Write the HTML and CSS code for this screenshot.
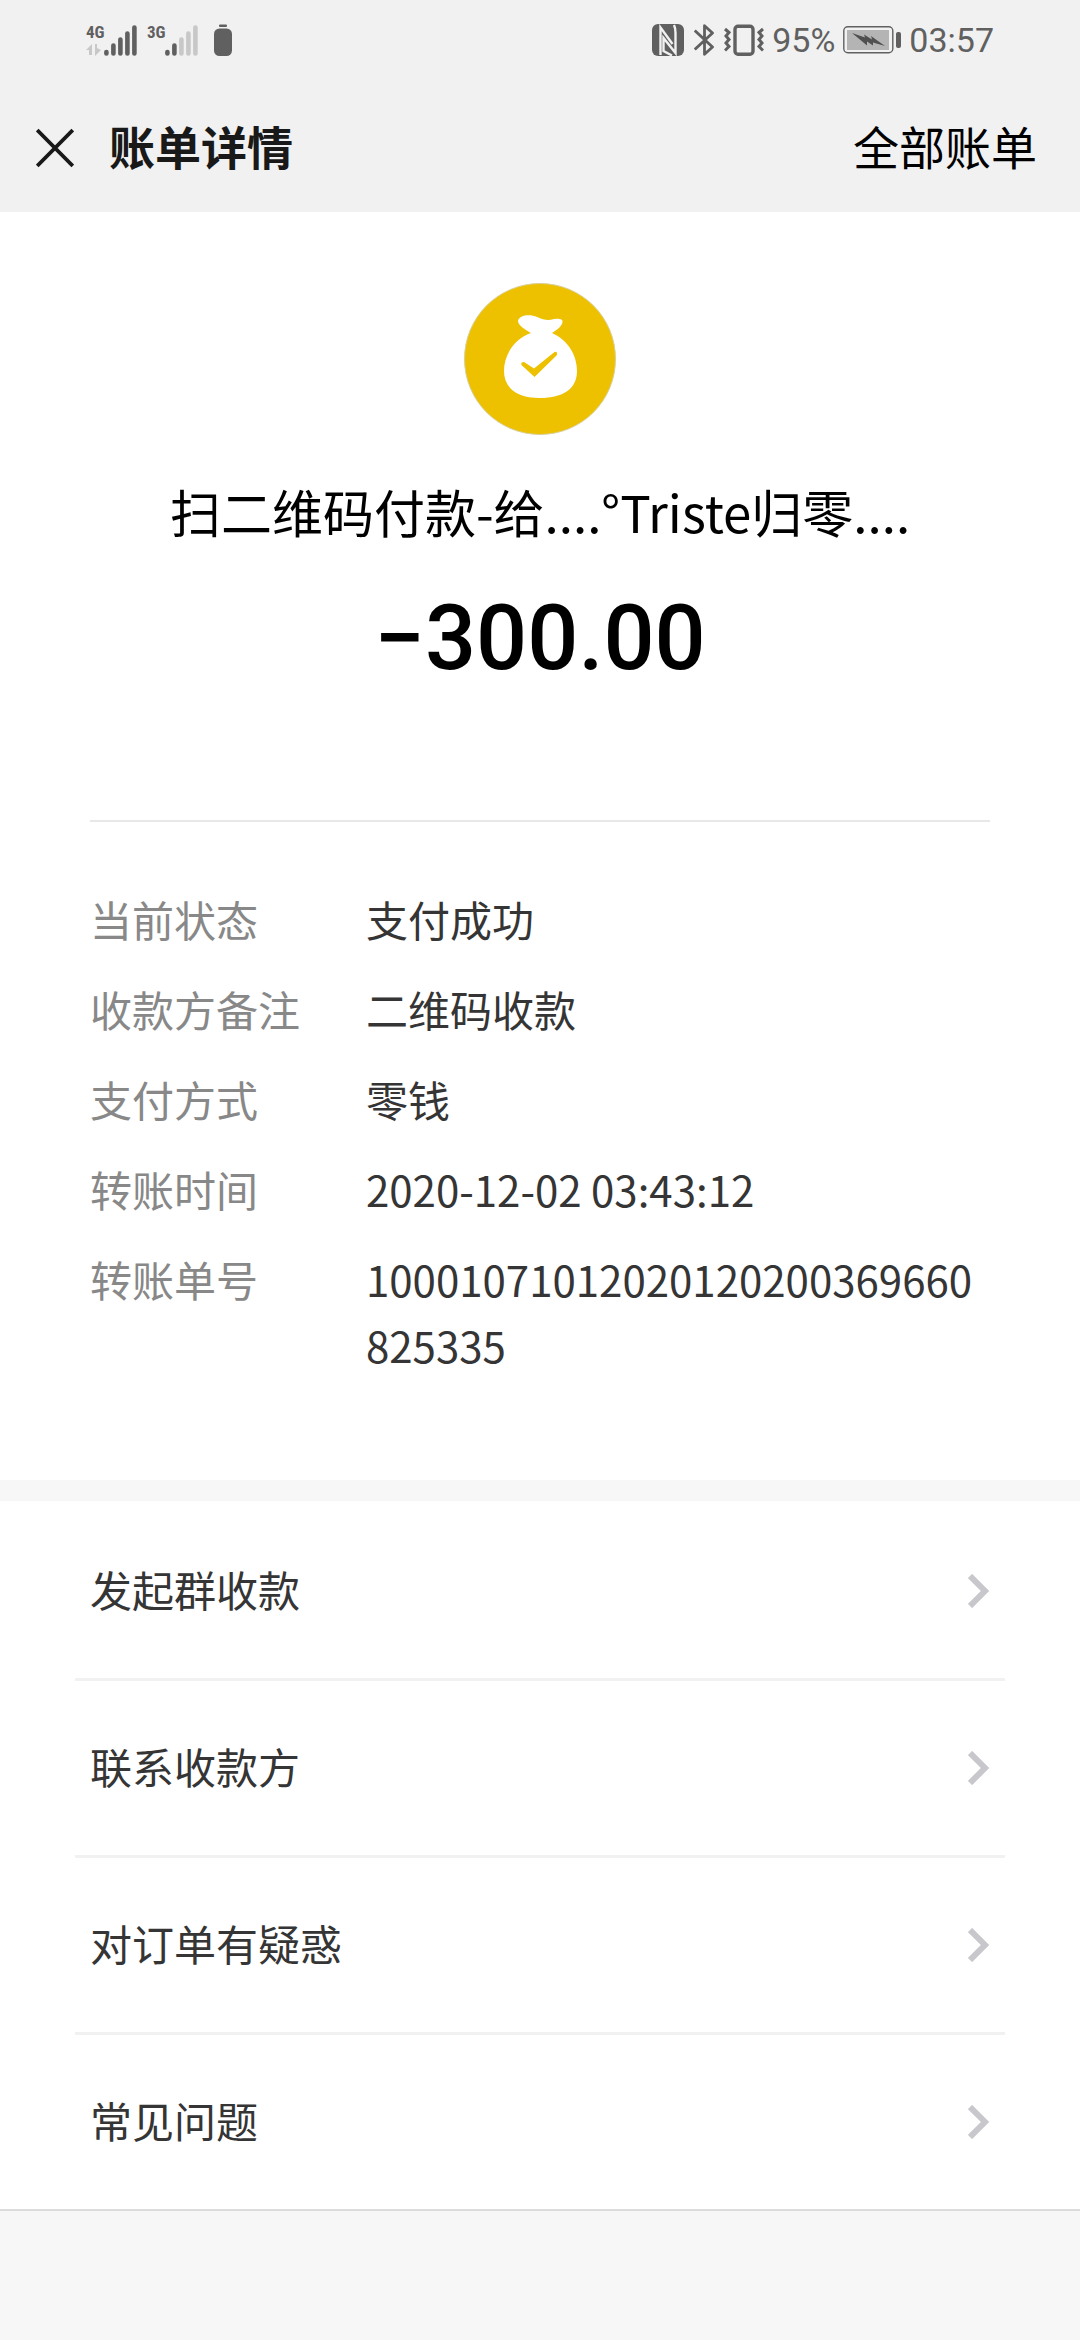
FILE: index.html
```html
<!DOCTYPE html>
<html lang="zh-CN">
<head>
  <meta charset="UTF-8">
  <meta name="viewport" content="width=device-width, initial-scale=1">
  <title>账单详情</title>
  <link rel="stylesheet" href="styles.css">
</head>
<body>
  <div class="top">
    <div class="status-bar">
      <div class="status-left">
        <div class="signal">
          <div class="network">
            <span>4G</span>
            <svg width="16" height="12" viewBox="0 0 16 12" fill="#c8c8c8">
              <path d="M6 0v11H3V6H0zM9 0h2v4l4 2-6 6z"/>
            </svg>
          </div>
          <svg width="33" height="31" viewBox="0 0 33 31" stroke="#606060" stroke-width="4.6" stroke-linecap="round">
            <path d="M2.4 27v1.4M9.4 20.6v7.8M16.4 14.6v13.8M23.4 8.6v19.8M30.4 2.6v25.8"/>
          </svg>
        </div>
        <div class="signal">
          <div class="network">
            <span>3G</span>
          </div>
          <svg width="33" height="31" viewBox="0 0 33 31" stroke-width="4.6" stroke-linecap="round">
            <path stroke="#606060" d="M2.4 27v1.4M9.4 20.6v7.8"/>
            <path stroke="#c8c8c8" d="M16.4 14.6v13.8M23.4 8.6v19.8M30.4 2.6v25.8"/>
          </svg>
        </div>
        <svg width="18" height="32" viewBox="0 0 18 32" fill="#606060">
          <rect x="5" y="0.5" width="8" height="2.6" rx="1"/>
          <rect x="0" y="4.5" width="18" height="27.5" rx="5.5"/>
        </svg>
      </div>

      <div class="status-right">
        <div class="status-icons">
          <svg width="32" height="32" viewBox="0 0 32 32">
            <rect width="32" height="32" rx="6" fill="#606060"/>
            <path d="M8.5 31V3.5L20.5 20M22 1C23.500 4 23.500 6 23.500 9V29L11.500 14V27L20 31.500" fill="none" stroke="#f1f1f1" stroke-width="2.4"/>
          </svg>
          <svg width="20" height="32" viewBox="0 0 20 32" fill="none" stroke="#606060" stroke-width="2.8" stroke-linejoin="round">
            <path d="M0.8 6.5L18.5 23 10.5 30.3V1.7L18.5 9 0.8 25.5"/>
          </svg>
          <svg width="40" height="32" viewBox="0 0 40 32" fill="none" stroke="#606060" stroke-width="3.4">
            <rect x="11" y="2.2" width="18" height="28" rx="3"/>
            <path stroke-width="3" d="M1 5l4 3.5-3 3.5 3 3.5-3 3.5 3 3.5-4 4M39 5l-4 3.5 3 3.5-3 3.5 3 3.5-3 3.5 4 4"/>
          </svg>
        </div>
        <span>95%</span>
        <svg width="58" height="28" viewBox="0 0 58 28">
          <rect x="0.8" y="0.8" width="49" height="26" rx="4" fill="#f1f1f1" stroke="#606060" stroke-width="1.4"/>
          <rect x="4" y="4" width="42" height="20" fill="#b4b4b4"/>
          <path d="M9 7l13 4.500-1-3 8 5-1-3.500L42 20l-12-3.500v3l-6-4v4z" fill="#505050"/>
          <rect x="53" y="6" width="5" height="16" rx="2" fill="#606060"/>
        </svg>
        <span>03:57</span>
      </div>
    </div>

    <div class="nav">
      <button class="close" type="button" aria-label="关闭">
        <svg width="38" height="40" viewBox="0 0 38 40" stroke="#191919" stroke-width="3.8">
          <path d="M1.2 2l35.600 36M36.800 2L1.200 38"/>
        </svg>
      </button>
      <h1>账单详情</h1>
      <a class="all-bills" href="#">全部账单</a>
    </div>
  </div>

  <div class="bill">
    <svg class="bill-icon" width="152" height="152" viewBox="0 0 152 152">
      <circle cx="76" cy="76" r="75.5" fill="#edc100" stroke="#d9cf9a" stroke-width="1"/>
      <path fill="#fff" d="M67 50C60 46 54 42 54 38C55 32 66 31 73 34C80 37 84 38 90 36C96 35 99 36 98.500 39C98 43 93 47 88 50C104 57 113 72 113 88C113 106 99 115 76 115C53 115 40 105 40 88C40 72 50 56 67 50Z"/>
      <path fill="#edc100" d="M57.500 82Q56.500 79 60 79L70 85.500L90.500 69Q93.500 68 93 72L70.500 94Z"/>
    </svg>
    <p class="bill-name">扫二维码付款-给....°Triste归零....</p>
    <p class="bill-amount">−300.00</p>

    <dl class="detail">
      <dt>当前状态</dt>
      <dd>支付成功</dd>
      <dt>收款方备注</dt>
      <dd>二维码收款</dd>
      <dt>支付方式</dt>
      <dd>零钱</dd>
      <dt>转账时间</dt>
      <dd>2020-12-02 03:43:12</dd>
      <dt>转账单号</dt>
      <dd>10001071012020120200369660825335</dd>
    </dl>
  </div>

  <div class="menu">
    <a href="#">发起群收款
      <svg width="22" height="34" viewBox="0 0 22 34"><path d="M2 2l15 15L2 32"/></svg>
    </a>
    <a href="#">联系收款方
      <svg width="22" height="34" viewBox="0 0 22 34"><path d="M2 2l15 15L2 32"/></svg>
    </a>
    <a href="#">对订单有疑惑
      <svg width="22" height="34" viewBox="0 0 22 34"><path d="M2 2l15 15L2 32"/></svg>
    </a>
    <a href="#">常见问题
      <svg width="22" height="34" viewBox="0 0 22 34"><path d="M2 2l15 15L2 32"/></svg>
    </a>
  </div>
</body>
</html>
```
FILE: styles.css
```css
body {
  margin: 0;
  background-color: #f7f7f7;
  font-family: "Noto Sans CJK SC", sans-serif;
  font-size: 42px;
  color: #353535;
}
svg {
  display: block;
  flex-shrink: 0;
}
a {
  color: inherit;
  text-decoration: none;
}
.top {
  background-color: #f1f1f1;
}

/* 状态栏 */
.status-bar {
  display: flex;
  justify-content: space-between;
  align-items: center;
  height: 80px;
  padding: 0 86px;
  font-family: Roboto, sans-serif;
  font-size: 34px;
  color: #606060;
}
.status-left,
.status-right,
.status-icons {
  display: flex;
  align-items: center;
}
.status-left {
  gap: 10px;
}
.status-left > svg {
  margin-left: 6px;
}
.status-right {
  gap: 8px;
}
.status-icons {
  gap: 10px;
}
.signal {
  display: flex;
  align-items: flex-end;
}
.network {
  display: flex;
  flex-direction: column;
  align-self: stretch;
  justify-content: space-between;
  width: 18px;
  font-family: "Roboto Condensed", "Liberation Sans Narrow", Roboto, sans-serif;
  font-size: 17px;
  font-weight: bold;
  line-height: 14px;
}

/* 标题栏 */
.nav {
  display: flex;
  align-items: center;
  height: 128px;
  padding: 4px 43px 0 36px;
  font-size: 46px;
}
.close {
  padding: 0;
  border: none;
  background: none;
  cursor: pointer;
}
.nav h1 {
  margin: 0 0 0 35px;
  padding-bottom: 6px;
  font-size: 46px;
  font-weight: bold;
  color: #191919;
}
.all-bills {
  margin-left: auto;
  padding-bottom: 6px;
  color: #000;
}

/* 账单内容 */
.bill {
  padding: 71px 90px 102px;
  background-color: #fff;
}
.bill-icon {
  margin: 0 auto;
}
.bill-name {
  margin: 40px 0 0;
  font-size: 51px;
  line-height: 72px;
  text-align: center;
  color: #000;
}
.bill-amount {
  margin: 40px 0 0;
  font-family: Roboto, sans-serif;
  font-size: 90px;
  font-weight: 500;
  line-height: 104px;
  text-align: center;
  color: #000;
}
.detail {
  display: grid;
  grid-template-columns: 276px 1fr;
  row-gap: 24px;
  margin: 129px 0 0;
  padding-top: 64px;
  border-top: 2px solid #e8e8e8;
  line-height: 66px;
}
.detail dt {
  color: #888;
}
.detail dd {
  margin: 0;
  word-break: break-all;
}

/* 底部菜单 */
.menu {
  margin-top: 21px;
  padding: 3px 75px 0;
  background-color: #fff;
  border-bottom: 2px solid #dcdcdc;
}
.menu a {
  display: flex;
  justify-content: space-between;
  align-items: center;
  height: 168px;
  padding: 0 15px 6px;
  border-bottom: 3px solid #f1f1f1;
}
.menu a:last-child {
  border-bottom: none;
}
.menu svg {
  margin-top: 6px;
  fill: none;
  stroke: #c7c7cc;
  stroke-width: 6;
}
```
